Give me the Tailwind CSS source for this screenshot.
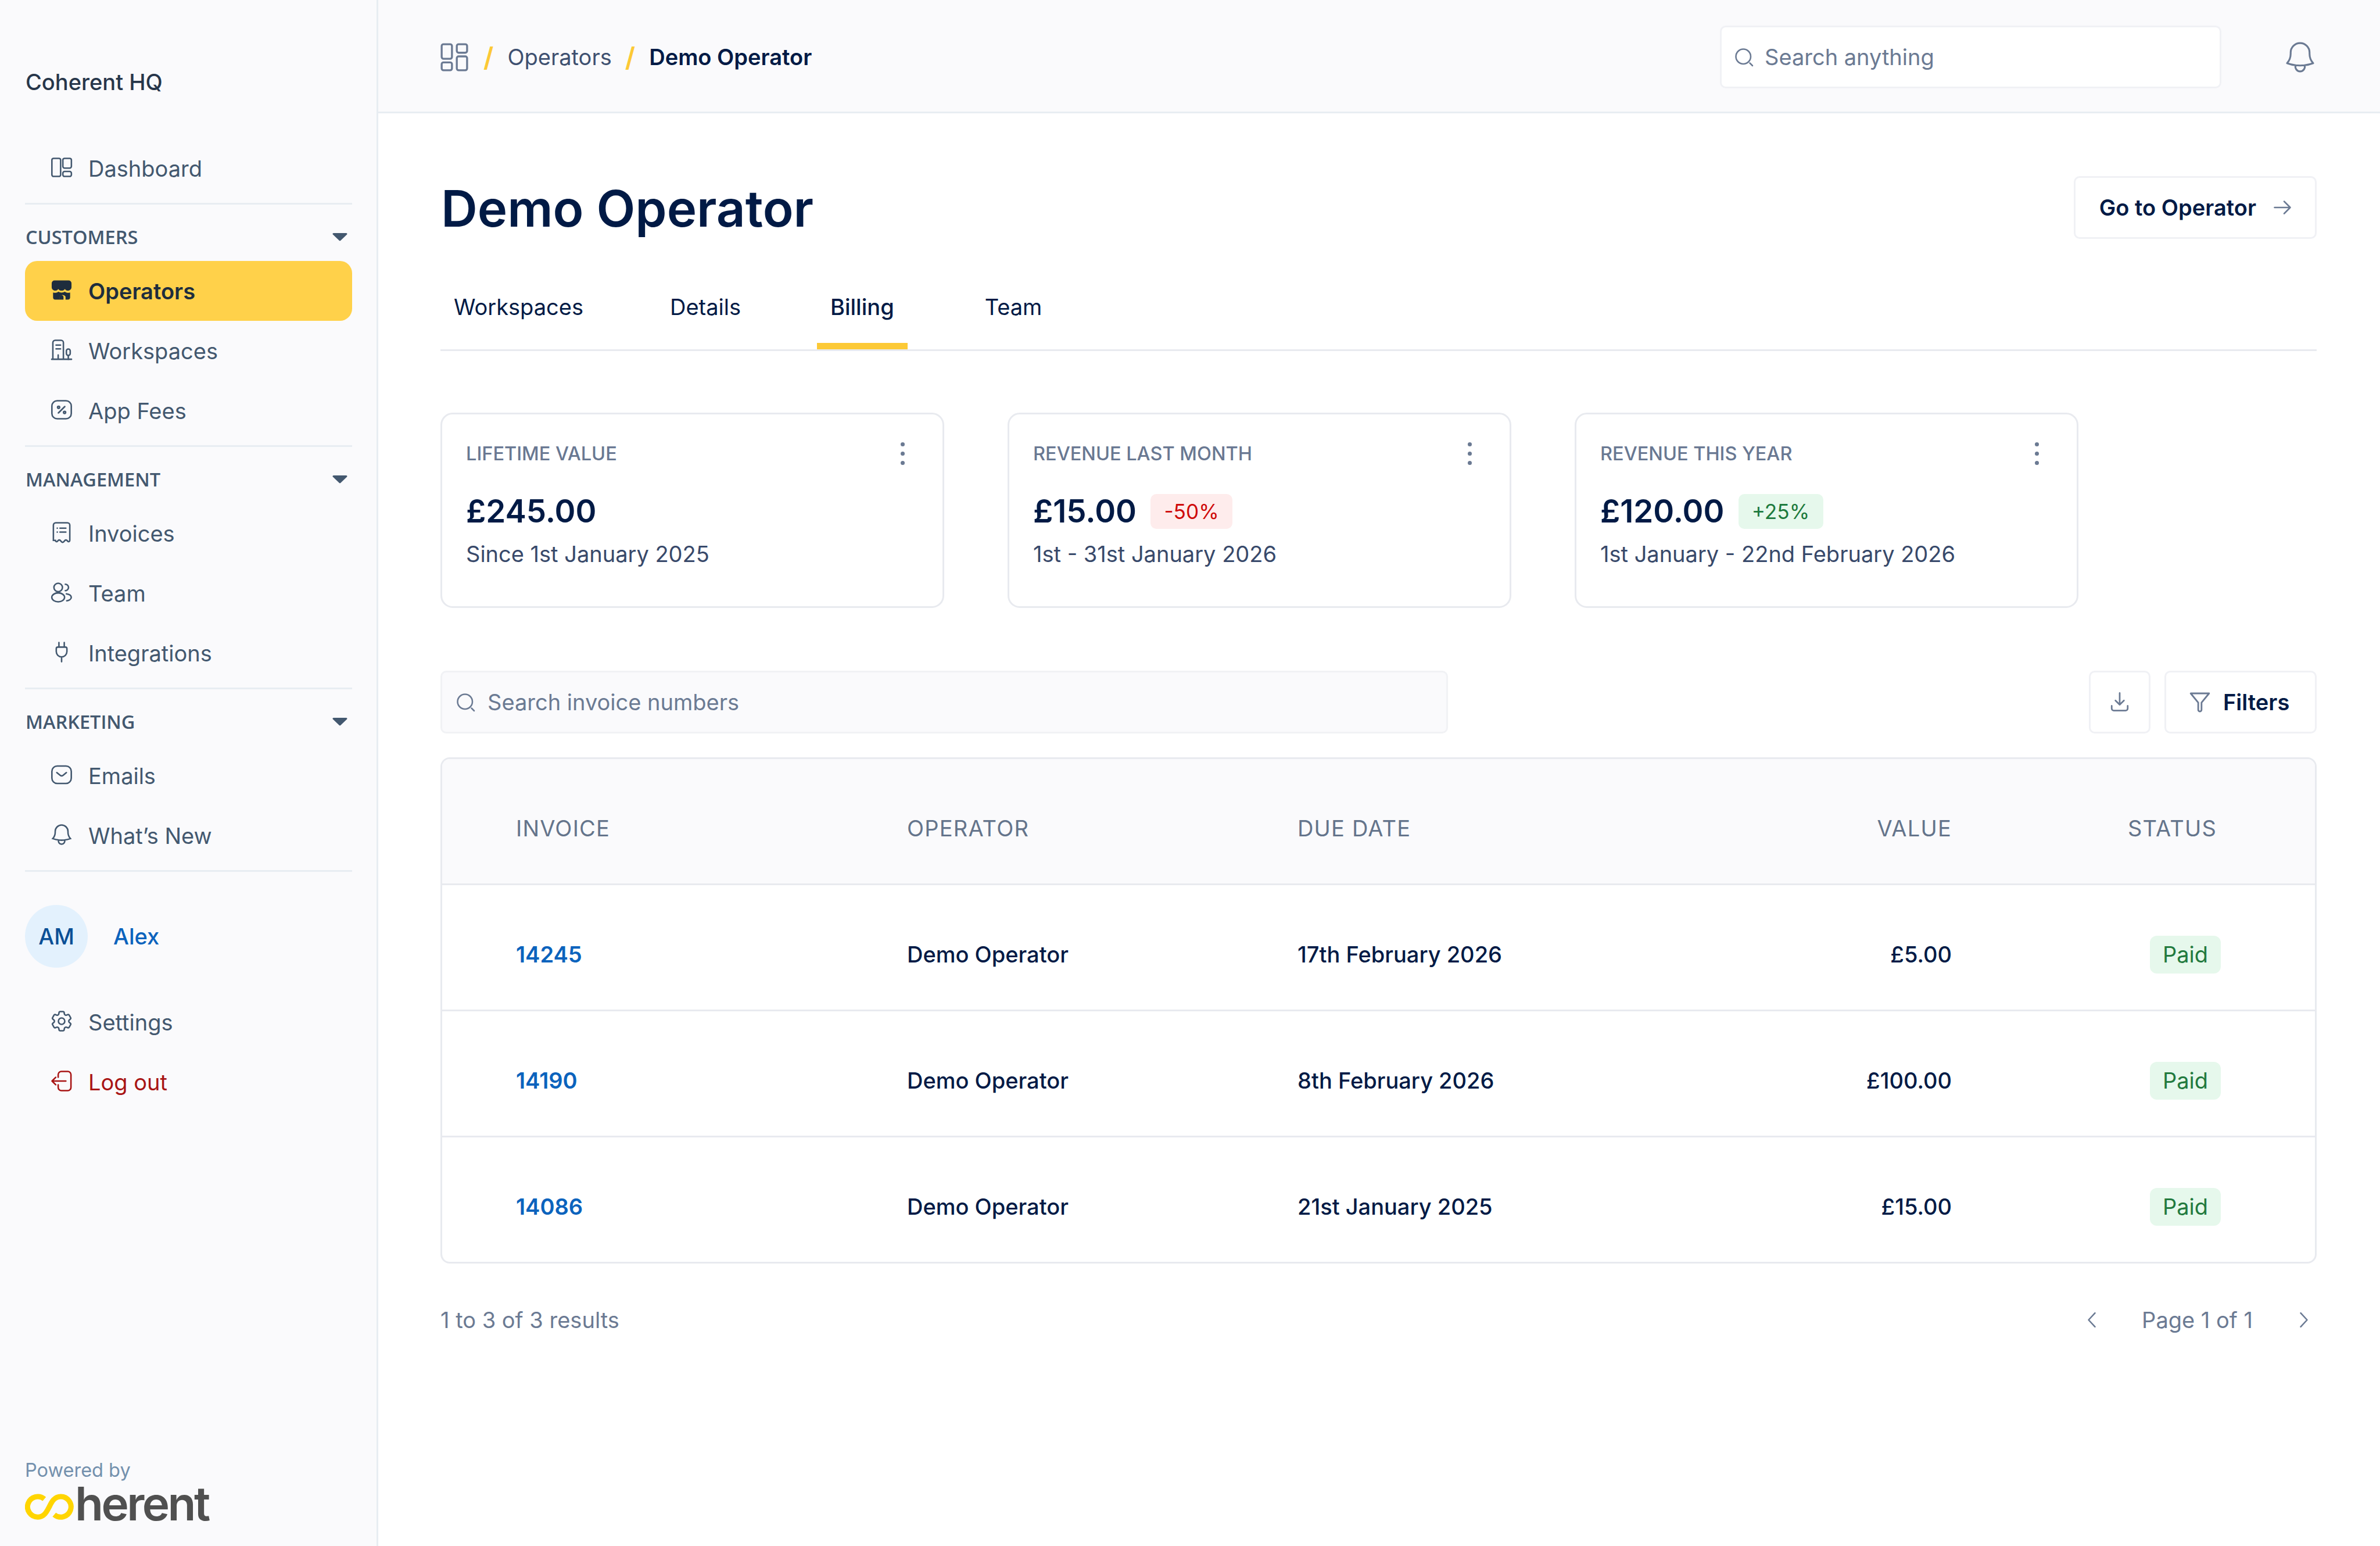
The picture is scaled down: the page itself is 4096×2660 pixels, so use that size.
<!DOCTYPE html>
<html lang="en">
<head>
  <meta charset="UTF-8" />
  <title>Demo Operator</title>
  <script src="https://cdn.jsdelivr.net/npm/@tailwindcss/browser@4"></script>
</head>
<body class="[font-family:Inter,sans-serif] bg-white">
<div class="flex w-[4096px] h-[2660px] overflow-hidden text-[38px] text-[#011a45]">

  <!-- sidebar -->
  <aside class="flex flex-col w-[651px] h-full shrink-0 bg-[#fafafc] border-r-[3px] border-[#e8edf2] pl-[43px] pr-[42px] text-[#43586f]">
    <div class="h-[238px] pt-[118px] pl-px text-[#27364a] font-medium leading-[46px]">Coherent HQ</div>

    <a class="flex items-center h-[103px] pt-[2px] pl-[41px] gap-[24px] [&>svg]:mt-[-5px]">
      <svg class="w-[44px] h-[44px]" viewBox="0 0 24 24" fill="none" stroke="currentColor" stroke-width="1.4"><rect x="2.9" y="3.5" width="8.2" height="17" rx="1.6"/><rect x="13.2" y="3.5" width="8" height="9.2" rx="1.6"/><rect x="13.2" y="15.8" width="8" height="4.7" rx="1.6"/></svg>
      <span>Dashboard</span>
    </a>
    <div class="h-[3px] mt-[8px] bg-[#e8edf2]"></div>
    <div class="flex items-center justify-between h-[97px] pt-[15px] pl-px pr-[8px] text-[32.5px] font-semibold [font-family:'Open_Sans',sans-serif]">
      <span>CUSTOMERS</span>
      <svg class="w-[26px] h-[16px]" viewBox="0 0 26 16" fill="#43586f" stroke="#43586f" stroke-width="3" stroke-linejoin="round"><path d="M2 2.5h22L13 13z"/></svg>
    </div>
    <a class="flex items-center h-[103px] pt-[2px] pl-[41px] gap-[24px] [&>svg]:mt-[-5px] bg-[#ffd14a] rounded-[21px] text-[#1e2d3d] font-semibold">
      <svg class="w-[44px] h-[44px]" viewBox="0 0 24 24" fill="currentColor"><path d="M5.4 3h13.2a2.7 2.7 0 0 1 2.7 2.7v3.6c0 1.9-1.5 3.3-3.2 3.3-1.3 0-2.3-.6-3-1.6-.7 1-1.8 1.6-3.1 1.6s-2.4-.6-3.1-1.6c-.7 1-1.7 1.6-3 1.6-1.7 0-3.2-1.4-3.2-3.3V5.7A2.700 2.700 0 0 1 5.400 3z"/><path d="M4 14.300c1.900.6 3.700.3 5-.8 1.600 1.200 4.400 1.200 6 0 1.300 1.100 3.100 1.400 5 .8V19a2 2 0 0 1-2 2h-2.300v-2.700a3 3 0 0 0-5.400 0V21H6a2 2 0 0 1-2-2z"/><path d="M10.200 21v-2.300a1.800 1.800 0 0 1 3.600 0V21z"/></svg>
      <span>Operators</span>
    </a>
    <a class="flex items-center h-[103px] pt-[2px] pl-[41px] gap-[24px] [&>svg]:mt-[-5px]">
      <svg class="w-[44px] h-[44px]" viewBox="0 0 24 24" fill="none" stroke="currentColor" stroke-width="1.4" stroke-linecap="round"><path d="M2.700 20.800h18.600M3.800 20.800V5.200a2.200 2.200 0 0 1 2.200-2.200h5.500a2.200 2.200 0 0 1 2.200 2.200v15.600M6.800 7.500h4.200M6.800 11h4.200M8.800 20.800v-4"/><rect x="16.500" y="11.200" width="3.600" height="6" rx="1.800"/><path d="M18.300 17.200v3.600"/></svg>
      <span>Workspaces</span>
    </a>
    <a class="flex items-center h-[103px] pt-[2px] pl-[41px] gap-[24px] [&>svg]:mt-[-5px]">
      <svg class="w-[44px] h-[44px]" viewBox="0 0 24 24" fill="none" stroke="currentColor" stroke-width="1.4" stroke-linecap="round"><rect x="2.900" y="3.500" width="18.200" height="17" rx="5"/><path d="M9 15l6-6"/><circle cx="9.200" cy="9.700" r="1"/><circle cx="14.800" cy="14.500" r="1"/></svg>
      <span>App Fees</span>
    </a>
    <div class="h-[3px] mt-[8px] bg-[#e8edf2]"></div>

    <div class="flex items-center justify-between h-[97px] pt-[15px] pl-px pr-[8px] text-[32.5px] font-semibold [font-family:'Open_Sans',sans-serif]">
      <span>MANAGEMENT</span>
      <svg class="w-[26px] h-[16px]" viewBox="0 0 26 16" fill="#43586f" stroke="#43586f" stroke-width="3" stroke-linejoin="round"><path d="M2 2.500h22L13 13z"/></svg>
    </div>
    <a class="flex items-center h-[103px] pt-[2px] pl-[41px] gap-[24px] [&>svg]:mt-[-5px]">
      <svg class="w-[44px] h-[44px]" viewBox="0 0 24 24" fill="none" stroke="currentColor" stroke-width="1.4" stroke-linecap="round"><path d="M4.300 19.500V5.200A2.200 2.200 0 0 1 6.500 3h11a2.200 2.200 0 0 1 2.200 2.200v14.300c0 1.200-1.300 1.600-2 .8l-.6-.7c-.6-.6-1.500-.6-2 0l-1.100 1.200c-.6.7-1.500.7-2.100 0l-1.100-1.200c-.5-.6-1.400-.6-2 0l-.6.7c-.7.8-2 .4-2-.8z"/><path d="M10.500 8h5.500M10.500 11.700h5.500M7.900 8h.1M7.900 11.700h.1"/></svg>
      <span>Invoices</span>
    </a>
    <a class="flex items-center h-[103px] pt-[2px] pl-[41px] gap-[24px] [&>svg]:mt-[-5px]">
      <svg class="w-[44px] h-[44px]" viewBox="0 0 24 24" fill="none" stroke="currentColor" stroke-width="1.4" stroke-linecap="round"><circle cx="8.800" cy="7.500" r="4"/><ellipse cx="8.800" cy="16.800" rx="6" ry="4.200"/><path d="M15.500 4.500a3 3 0 0 1 0 6M16.500 13.500c2.500.4 4.600 1.600 4.600 3.300s-2 2.900-4.300 3.200"/></svg>
      <span>Team</span>
    </a>
    <a class="flex items-center h-[103px] pt-[2px] pl-[41px] gap-[24px] [&>svg]:mt-[-5px]">
      <svg class="w-[44px] h-[44px]" viewBox="0 0 24 24" fill="none" stroke="currentColor" stroke-width="1.4" stroke-linecap="round"><path d="M9.500 3v4.300M14.500 3v4.300M7 8.800a1.500 1.500 0 0 1 1.500-1.500h7A1.500 1.500 0 0 1 17 8.800v2.700a5 5 0 0 1-10 0zM12 16.500V21"/></svg>
      <span>Integrations</span>
    </a>
    <div class="h-[3px] mt-[8px] bg-[#e8edf2]"></div>

    <div class="flex items-center justify-between h-[97px] pt-[15px] pl-px pr-[8px] text-[32.5px] font-semibold [font-family:'Open_Sans',sans-serif]">
      <span>MARKETING</span>
      <svg class="w-[26px] h-[16px]" viewBox="0 0 26 16" fill="#43586f" stroke="#43586f" stroke-width="3" stroke-linejoin="round"><path d="M2 2.500h22L13 13z"/></svg>
    </div>
    <a class="flex items-center h-[103px] pt-[2px] pl-[41px] gap-[24px] [&>svg]:mt-[-5px]">
      <svg class="w-[44px] h-[44px]" viewBox="0 0 24 24" fill="none" stroke="currentColor" stroke-width="1.4" stroke-linecap="round"><rect x="2.900" y="3.800" width="18.200" height="16.400" rx="5"/><path d="M7.500 10l3.200 2.500c.8.600 1.900.6 2.700 0l3.100-2.500"/></svg>
      <span>Emails</span>
    </a>
    <a class="flex items-center h-[103px] pt-[2px] pl-[41px] gap-[24px] [&>svg]:mt-[-5px]">
      <svg class="w-[44px] h-[44px]" viewBox="0 0 24 24" fill="none" stroke="currentColor" stroke-width="1.400" stroke-linecap="round"><path d="M14.857 17.082a23.848 23.848 0 0 0 5.454-1.310A8.967 8.967 0 0 1 18 9.750V9A6 6 0 0 0 6 9v.750a8.967 8.967 0 0 1-2.312 6.022c1.733.64 3.560 1.085 5.455 1.310m5.714 0a24.255 24.255 0 0 1-5.714 0m5.714 0a3 3 0 1 1-5.714 0"/></svg>
      <span>What’s New</span>
    </a>
    <div class="h-[3px] mt-[8px] bg-[#e8edf2]"></div>

    <div class="flex items-center mt-[57px] gap-[44px]">
      <div class="flex items-center justify-center w-[108px] h-[108px] rounded-full bg-[#e3f1fd] text-[#0a4f96] font-medium">AM</div>
      <span class="text-[#0b63bd] font-medium">Alex</span>
    </div>
    <a class="flex items-center h-[103px] mt-[42px] pt-[2px] pl-[41px] gap-[24px] [&>svg]:mt-[-5px]">
      <svg class="w-[44px] h-[44px]" viewBox="0 0 24 24" fill="none" stroke="currentColor" stroke-width="1.400" stroke-linecap="round" stroke-linejoin="round"><path d="M9.594 3.940c.09-.542.56-.94 1.110-.94h2.593c.55 0 1.020.398 1.110.94l.213 1.281c.063.374.313.686.645.870.074.04.147.083.22.127.325.196.72.257 1.075.124l1.217-.456a1.125 1.125 0 0 1 1.370.49l1.296 2.247a1.125 1.125 0 0 1-.26 1.431l-1.003.827c-.293.241-.438.613-.43.992a7.723 7.723 0 0 1 0 .255c-.008.378.137.75.43.991l1.004.827c.424.35.534.955.26 1.430l-1.298 2.247a1.125 1.125 0 0 1-1.369.491l-1.217-.456c-.355-.133-.75-.072-1.076.124a6.470 6.470 0 0 1-.22.128c-.331.183-.581.495-.644.869l-.213 1.281c-.09.543-.56.94-1.110.94h-2.594c-.55 0-1.019-.398-1.110-.94l-.213-1.281c-.062-.374-.312-.686-.644-.870a6.520 6.520 0 0 1-.22-.127c-.325-.196-.72-.257-1.076-.124l-1.217.456a1.125 1.125 0 0 1-1.369-.49l-1.297-2.247a1.125 1.125 0 0 1 .26-1.431l1.004-.827c.292-.24.437-.613.43-.991a6.932 6.932 0 0 1 0-.255c.007-.38-.138-.751-.43-.992l-1.004-.827a1.125 1.125 0 0 1-.26-1.430l1.297-2.247a1.125 1.125 0 0 1 1.370-.491l1.216.456c.356.133.751.072 1.076-.124.072-.044.146-.086.22-.128.332-.183.582-.495.644-.869l.214-1.280Z"/><circle cx="12" cy="12" r="3"/></svg>
      <span>Settings</span>
    </a>
    <a class="flex items-center h-[103px] pt-[2px] pl-[41px] gap-[24px] [&>svg]:mt-[-5px] text-[#a81414]">
      <svg class="w-[44px] h-[44px]" viewBox="0 0 24 24" fill="none" stroke="currentColor" stroke-width="1.400" stroke-linecap="round" stroke-linejoin="round"><path d="M8.800 8.500V6a3 3 0 0 1 3-3h6a3 3 0 0 1 3 3v12a3 3 0 0 1-3 3h-6a3 3 0 0 1-3-3v-2.500M16 12H3M6.500 8.500L3 12l3.500 3.500"/></svg>
      <span>Log out</span>
    </a>

    <div class="mt-auto pb-[44px]">
      <div class="text-[32.5px] leading-[36px] text-[#7390ad]">Powered by</div>
      <div class="flex items-end h-[68px]">
        <svg class="w-[86px] h-[46px] shrink-0" viewBox="0 0 86 46" fill="none" stroke="#ffd500" stroke-width="9"><path d="M33.300 9.100A17.600 17.600 0 1 0 22 40.200C33 40.200 37.500 31 41.800 22.600 46 14 50.500 5 61.600 5A17.600 17.600 0 1 1 50.300 36.100"/></svg>
        <span class="text-[80px] leading-[64px] mb-[-3px] font-semibold tracking-[-3.5px] text-[#505050]">herent</span>
      </div>
    </div>
  </aside>

  <!-- main -->
  <main class="flex flex-col flex-1 min-w-0">
    <header class="flex items-center justify-between h-[195px] pt-[4px] pl-[107px] pr-[109px] bg-[#fafafc] border-b-[3px] border-[#e8edf2] shrink-0">
      <div class="flex items-center">
        <svg class="w-[50px] h-[50px] ml-[-1px]" viewBox="0 0 24 24" fill="none" stroke="#6b7a93" stroke-width="1.600"><rect x="1.500" y="1.500" width="8.500" height="12" rx="1.500"/><rect x="14" y="1.500" width="8.500" height="7" rx="1.500"/><rect x="1.500" y="16.500" width="8.500" height="6.500" rx="1.500"/><rect x="14" y="11.500" width="8.500" height="11.500" rx="1.500"/></svg>
        <span class="ml-[25px] text-[46px] leading-[46px] text-[#fcc936] font-semibold">/</span>
        <span class="ml-[24px] text-[#3e5070]">Operators</span>
        <span class="ml-[23px] text-[46px] leading-[46px] text-[#fcc936] font-semibold">/</span>
        <span class="ml-[24px] font-semibold">Demo Operator</span>
      </div>
      <div class="flex items-center">
        <div class="flex items-center w-[863px] h-[108px] pl-[20px] gap-[18px] bg-white border-[3px] border-[#f0f1f5] rounded-[10px] text-[#6b7a93]">
          <svg class="w-[36px] h-[36px]" viewBox="0 0 24 24" fill="none" stroke="currentColor" stroke-width="1.700" stroke-linecap="round"><circle cx="11.500" cy="11.500" r="8.500"/><path d="M22 22l-3-3"/></svg>
          <span>Search anything</span>
        </div>
        <svg class="w-[65px] h-[65px] ml-[103px] mr-[-4px]" viewBox="0 0 24 24" fill="none" stroke="#6b7a93" stroke-width="1.150" stroke-linecap="round" stroke-linejoin="round"><path d="M14.857 17.082a23.848 23.848 0 0 0 5.454-1.310A8.967 8.967 0 0 1 18 9.750V9A6 6 0 0 0 6 9v.750a8.967 8.967 0 0 1-2.312 6.022c1.733.64 3.560 1.085 5.455 1.310m5.714 0a24.255 24.255 0 0 1-5.714 0m5.714 0a3 3 0 1 1-5.714 0"/></svg>
      </div>
    </header>

    <div class="flex flex-col pt-[108px] pl-[107px] pr-[109px]">
      <div class="flex items-center justify-between h-[108px]">
        <h1 class="text-[87px] font-semibold leading-[108px] pt-[4px] pl-[1px]">Demo Operator</h1>
        <button class="flex items-center h-[108px] pl-[41px] pr-[38px] gap-[27px] bg-white border-[3px] border-[#f0f1f5] rounded-[10px] font-semibold">
          <span>Go to Operator</span>
          <svg class="w-[36px] h-[36px]" viewBox="0 0 24 24" fill="none" stroke="#6b7a93" stroke-width="1.700" stroke-linecap="round" stroke-linejoin="round"><path d="M3 12h18M14 5l7 7-7 7"/></svg>
        </button>
      </div>

      <nav class="flex mt-[44px] border-b-[3px] border-[#e8eaef]">
        <a class="flex items-center h-[146px] px-[23px] border-y-[11px] border-transparent">Workspaces</a>
        <a class="flex items-center h-[146px] px-[23px] ml-[103px] border-y-[11px] border-transparent">Details</a>
        <a class="flex items-center h-[146px] px-[23px] ml-[108px] border-y-[11px] border-t-transparent border-b-[#fcc936] font-medium">Billing</a>
        <a class="flex items-center h-[146px] px-[23px] ml-[110px] border-y-[11px] border-transparent">Team</a>
      </nav>

      <!-- stat cards -->
      <div class="flex gap-[109px] mt-[106px]">
        <div class="w-[867px] h-[336px] pt-[40px] pl-[41px] pr-[65px] border-[3px] border-[#e8eaef] rounded-[21px]">
          <div class="flex items-center justify-between h-[56px]">
            <span class="text-[32.500px] font-medium text-[#697892]">LIFETIME VALUE</span>
            <div class="flex flex-col gap-[9px] mt-[-2px]"><i class="block w-[7px] h-[7px] rounded-full bg-[#6b7a93]"></i><i class="block w-[7px] h-[7px] rounded-full bg-[#6b7a93]"></i><i class="block w-[7px] h-[7px] rounded-full bg-[#6b7a93]"></i></div>
          </div>
          <div class="flex items-center h-[60px] mt-[41px] gap-[24px]">
            <span class="text-[54.500px] font-semibold">£245.00</span>
          </div>
          <div class="mt-[21px] leading-[44px] text-[#38496a]">Since 1st January 2025</div>
        </div>
        <div class="w-[867px] h-[336px] pt-[40px] pl-[41px] pr-[65px] border-[3px] border-[#e8eaef] rounded-[21px]">
          <div class="flex items-center justify-between h-[56px]">
            <span class="text-[32.500px] font-medium text-[#697892]">REVENUE LAST MONTH</span>
            <div class="flex flex-col gap-[9px] mt-[-2px]"><i class="block w-[7px] h-[7px] rounded-full bg-[#6b7a93]"></i><i class="block w-[7px] h-[7px] rounded-full bg-[#6b7a93]"></i><i class="block w-[7px] h-[7px] rounded-full bg-[#6b7a93]"></i></div>
          </div>
          <div class="flex items-center h-[60px] mt-[41px] gap-[24px]">
            <span class="text-[54.500px] font-semibold">£15.00</span>
            <span class="flex items-center justify-center h-[60px] w-[141px] rounded-[10px] text-[35.200px] bg-[#feecec] text-[#cf0a0a]">-50%</span>
          </div>
          <div class="mt-[21px] leading-[44px] text-[#38496a]">1st - 31st January 2026</div>
        </div>
        <div class="w-[867px] h-[336px] pt-[40px] pl-[41px] pr-[65px] border-[3px] border-[#e8eaef] rounded-[21px]">
          <div class="flex items-center justify-between h-[56px]">
            <span class="text-[32.500px] font-medium text-[#697892]">REVENUE THIS YEAR</span>
            <div class="flex flex-col gap-[9px] mt-[-2px]"><i class="block w-[7px] h-[7px] rounded-full bg-[#6b7a93]"></i><i class="block w-[7px] h-[7px] rounded-full bg-[#6b7a93]"></i><i class="block w-[7px] h-[7px] rounded-full bg-[#6b7a93]"></i></div>
          </div>
          <div class="flex items-center h-[60px] mt-[41px] gap-[24px]">
            <span class="text-[54.500px] font-semibold">£120.00</span>
            <span class="flex items-center justify-center h-[60px] w-[146px] rounded-[10px] text-[35.200px] bg-[#e6f8ec] text-[#1d7a3d]">+25%</span>
          </div>
          <div class="mt-[21px] leading-[44px] text-[#38496a]">1st January - 22nd February 2026</div>
        </div>
      </div>

      <!-- invoice search + actions -->
      <div class="flex items-center justify-between h-[108px] mt-[108px]">
        <div class="flex items-center w-[1734px] h-[108px] pl-[22px] gap-[20px] bg-[#fafafc] border-[3px] border-[#f1f2f5] rounded-[10px] text-[#6b7a93]">
          <svg class="w-[36px] h-[36px]" viewBox="0 0 24 24" fill="none" stroke="currentColor" stroke-width="1.700" stroke-linecap="round"><circle cx="11.500" cy="11.500" r="8.500"/><path d="M22 22l-3-3"/></svg>
          <span>Search invoice numbers</span>
        </div>
        <div class="flex items-center gap-[24px]">
          <button class="flex items-center justify-center w-[106px] h-[108px] border-[3px] border-[#f0f1f5] rounded-[10px]">
            <svg class="w-[44px] h-[44px]" viewBox="0 0 24 24" fill="none" stroke="#6b7a93" stroke-width="1.500" stroke-linecap="round" stroke-linejoin="round"><path d="M12 3.500v11M8 10.500l4 4 4-4M4.500 15.500v2.500a2 2 0 0 0 2 2h11a2 2 0 0 0 2-2v-2.500"/></svg>
          </button>
          <button class="flex items-center w-[262px] h-[108px] pl-[38px] gap-[20px] border-[3px] border-[#f0f1f5] rounded-[10px] font-semibold">
            <svg class="w-[40px] h-[40px]" viewBox="0 0 24 24" fill="none" stroke="#6b7a93" stroke-width="1.700" stroke-linecap="round" stroke-linejoin="round"><path d="M2.500 3h19l-7.800 9.500V20a1.700 1.700 0 0 1-3.400 0v-7.500z"/></svg>
            <span>Filters</span>
          </button>
        </div>
      </div>

      <!-- invoices table -->
      <div class="mt-[41px] border-[3px] border-[#e8eaef] rounded-[16px] overflow-hidden font-medium">
        <div class="grid grid-cols-[673px_672px_813px_313px_1fr] items-center h-[217px] pt-[24px] pl-[127px] bg-[#fafafc] border-b-[3px] border-[#e8eaef] font-normal tracking-[1.200px] text-[#64748b]">
          <div>INVOICE</div><div>OPERATOR</div><div>DUE DATE</div>
          <div class="justify-self-end">VALUE</div>
          <div class="pl-[303px]">STATUS</div>
        </div>
        <div class="grid grid-cols-[673px_672px_813px_313px_1fr] items-center h-[217px] pt-[24px] pl-[127px] border-b-[3px] border-[#e8eaef]">
          <div class="text-[#0b63bd] font-semibold">14245</div><div>Demo Operator</div><div>17th February 2026</div>
          <div class="justify-self-end">£5.00</div>
          <div class="pl-[341px]"><span class="flex items-center justify-center w-[122px] h-[65px] rounded-[12px] bg-[#e6f8ec] text-[#227a3e] font-normal">Paid</span></div>
        </div>
        <div class="grid grid-cols-[673px_672px_813px_313px_1fr] items-center h-[217px] pt-[24px] pl-[127px] border-b-[3px] border-[#e8eaef]">
          <div class="text-[#0b63bd] font-semibold">14190</div><div>Demo Operator</div><div>8th February 2026</div>
          <div class="justify-self-end">£100.00</div>
          <div class="pl-[341px]"><span class="flex items-center justify-center w-[122px] h-[65px] rounded-[12px] bg-[#e6f8ec] text-[#227a3e] font-normal">Paid</span></div>
        </div>
        <div class="grid grid-cols-[673px_672px_813px_313px_1fr] items-center h-[214px] pt-[24px] pl-[127px]">
          <div class="text-[#0b63bd] font-semibold">14086</div><div>Demo Operator</div><div>21st January 2025</div>
          <div class="justify-self-end">£15.00</div>
          <div class="pl-[341px]"><span class="flex items-center justify-center w-[122px] h-[65px] rounded-[12px] bg-[#e6f8ec] text-[#227a3e] font-normal">Paid</span></div>
        </div>
      </div>

      <!-- pagination -->
      <div class="flex items-center justify-between h-[46px] mt-[74px] text-[#6b7a93]">
        <span>1 to 3 of 3 results</span>
        <div class="flex items-center">
          <svg class="w-[44px] h-[44px]" viewBox="0 0 24 24" fill="none" stroke="currentColor" stroke-width="1.400" stroke-linecap="round" stroke-linejoin="round"><path d="M15 5.500L9 12l6 6.500"/></svg>
          <span class="ml-[64px]">Page 1 of 1</span>
          <svg class="w-[44px] h-[44px] ml-[66px]" viewBox="0 0 24 24" fill="none" stroke="currentColor" stroke-width="1.400" stroke-linecap="round" stroke-linejoin="round"><path d="M9 5.500L15 12l-6 6.500"/></svg>
        </div>
      </div>
    </div>
  </main>
</div>
</body>
</html>
